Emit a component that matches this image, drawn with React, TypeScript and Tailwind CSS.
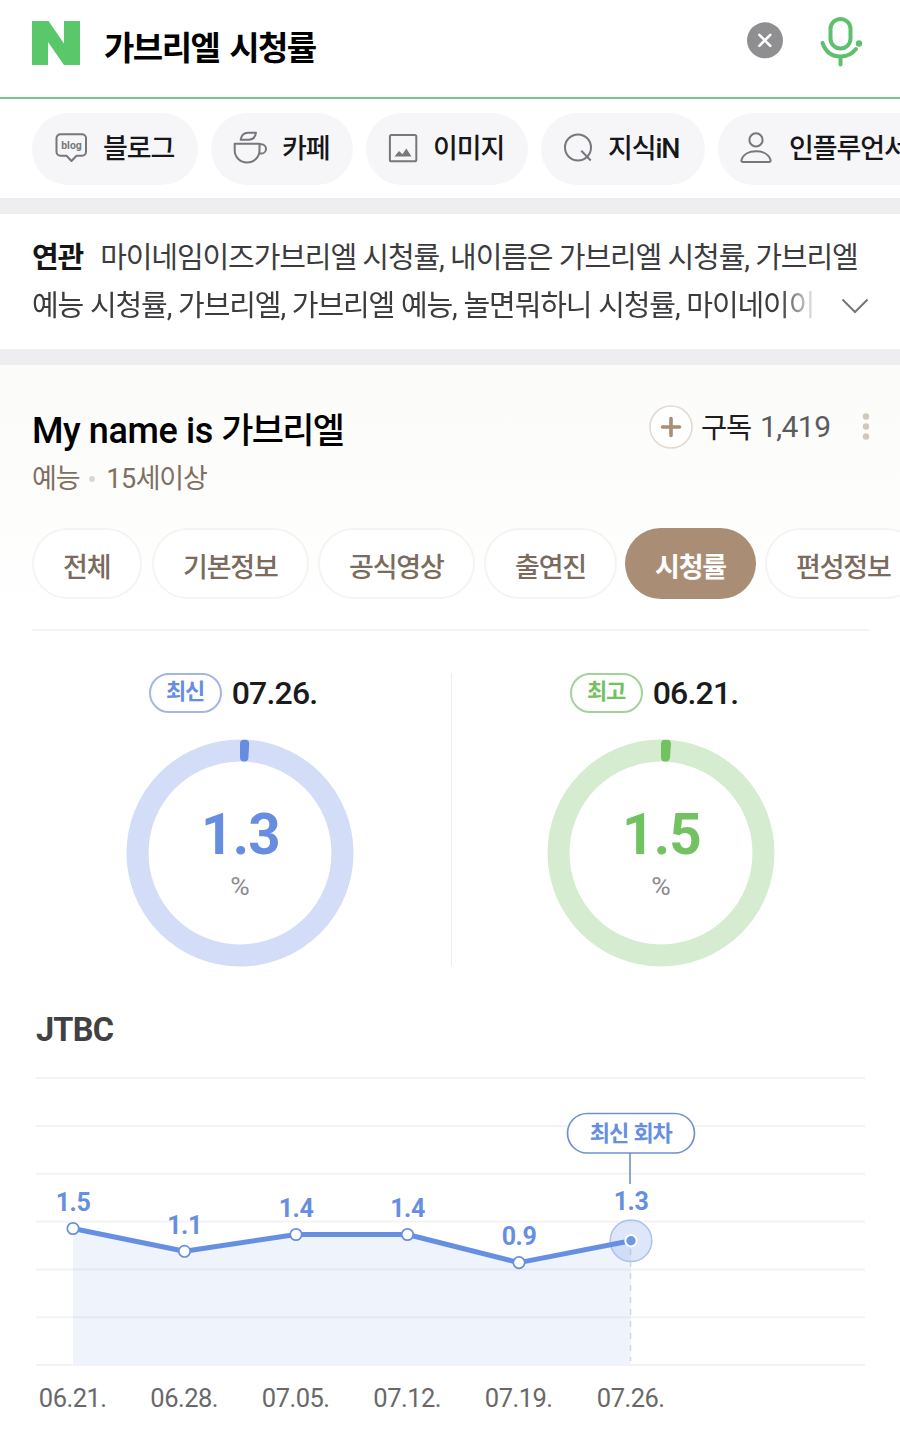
import type { ReactNode } from "react"

interface DonutProps {
    label: string;
    date: string;
    value: string;
    color: string;
    track: string;
    marker: string;
    badgeClass: string;
}

const BlogIcon = () => (
    <svg width="34" height="34" viewBox="0 0 34 34" fill="none" stroke="#77777b" strokeWidth="2">
        <path d="M6.500 3.200h21.500a4 4 0 0 1 4 4v13.600a4 4 0 0 1-4 4h-5.500L17.500 30l-5-5.200h-6a4 4 0 0 1-4-4V7.200a4 4 0 0 1 4-4z" strokeLinejoin="round" />
        <text x="17.500" y="18" textAnchor="middle" fontSize="11.500" fontWeight="700" fill="#77777b" stroke="none" textLength="20.500" lengthAdjust="spacingAndGlyphs">blog</text>
    </svg>
)

const CafeIcon = () => (
    <svg width="34" height="34" viewBox="0 0 34 34" fill="none" stroke="#77777b" strokeWidth="2" strokeLinejoin="round">
        <path d="M1.700 12.800h24.800v6.800a12.400 11.900 0 0 1-24.800 0z" />
        <path d="M26.500 13.300h1.900a4.600 4.600 0 0 1 0 9.200h-2.400" />
        <path d="M7.600 8.800C8.400 4 11 1.700 15 1.700h8C22.400 6.300 19.500 8.800 15.200 8.800z" />
    </svg>
)

const ImageIcon = () => (
    <svg width="34" height="34" viewBox="0 0 34 34" fill="none" stroke="#77777b" strokeWidth="2">
        <rect x="3.9" y="3.9" width="26.4" height="26.4" rx="1.6" />
        <path d="M8.500 25.500l4.500-5.500 3.500 3.200 3.800-5.700 5.200 8z" fill="#77777b" stroke="none" />
    </svg>
)

const KinIcon = () => (
    <svg width="34" height="34" viewBox="0 0 34 34" fill="none" stroke="#77777b" strokeWidth="2">
        <circle cx="17" cy="16.500" r="13" />
        <path d="M20.300 19.700l9.400 9.800" />
    </svg>
)

const PersonIcon = () => (
    <svg width="34" height="34" viewBox="0 0 34 34" fill="none" stroke="#77777b" strokeWidth="2">
        <circle cx="16" cy="8.900" r="6.600" />
        <path d="M3 31c-1.300 0-1.800-.8-1.500-1.900C3 23.300 9 20.300 16 20.300s13 3 14.500 8.800c.3 1.100-.2 1.900-1.500 1.900z" />
    </svg>
)

const Chip = ({ icon, text, className }: { icon: ReactNode; text: string; className: string }) => (
    <div className={`flex h-[72px] shrink-0 items-center rounded-full bg-[#f6f6f9] pb-[2px] ${className}`}>
        {icon}
        <span className="mt-[3px] text-[27px] font-medium tracking-[-1.1px] whitespace-nowrap text-[#17171a]">{text}</span>
    </div>
)

const Tab = ({ text, active, className }: { text: string; active?: boolean; className: string }) => (
    <div
        className={`flex h-[71px] shrink-0 items-center rounded-full pt-[9px] text-[27px] tracking-[-1.2px] whitespace-nowrap ${active ? "bg-[#a98d74] pl-[30px] font-bold text-white" : "border-2 border-[#f5f4f2] bg-white pl-[29px] font-medium text-[#7b6b5d]"} ${className}`}
    >
        {text}
    </div>
)

const Donut = ({ label, date, value, color, track, marker, badgeClass }: DonutProps) => (
    <div className="flex w-[228px] flex-col items-center">
        <div className="flex h-[40px] items-center pr-[14px]">
            <span className={`flex h-[40px] w-[73px] items-center justify-center rounded-full border-2 pb-[3px] text-[22px] font-bold tracking-[-1px] ${badgeClass}`}>{label}</span>
            <span className="ml-[10px] text-[32px] font-medium tracking-[-0.800px] text-[#1b1b1d]">{date}</span>
        </div>
        <svg className="mt-[26px]" width="228" height="228" viewBox="0 0 228 228">
            <circle cx="114" cy="114" r="102.500" fill="none" stroke={track} strokeWidth="22" />
            <path d={marker} fill={color} stroke={color} strokeWidth="8" strokeLinejoin="round" strokeLinecap="round" />
            <text x="114.500" y="114.500" textAnchor="middle" fontSize="56.500" fontWeight="700" letterSpacing="-0.8" fill={color}>{value}</text>
            <text x="114" y="156" textAnchor="middle" fontSize="26.500" fontWeight="400" fill="#8b8b8e">%</text>
        </svg>
    </div>
)

const points = [
    { date: "06.21.", value: "1.5", x: 37, y: 151.5, labelY: 134 },
    { date: "06.28.", value: "1.1", x: 148.5, y: 174.3, labelY: 157 },
    { date: "07.05.", value: "1.4", x: 260, y: 157.5, labelY: 140 },
    { date: "07.12.", value: "1.4", x: 371.5, y: 157.5, labelY: 140 },
    { date: "07.19.", value: "0.9", x: 483, y: 185.6, labelY: 168 },
    { date: "07.26.", value: "1.3", x: 595, y: 163.8, labelY: 133.4 },
]

const gridLines = [1, 49, 96.7, 144.6, 192.5, 240.3, 288]

const RatingChart = () => {
    const line = points.map((p) => `${p.x},${p.y}`).join(" ")

    return (
        <svg width="830" height="350" viewBox="0 0 830 350">
            {gridLines.map((y) => (
                <line key={y} x1="0" x2="829" y1={y} y2={y} stroke="#f3f3f5" strokeWidth="2" />
            ))}
            <polygon points={`37,287 ${line} 594.5,287`} fill="#5a87e6" fillOpacity="0.1" />
            <line x1="594.500" x2="594.500" y1="172" y2="284" stroke="#cdd6eb" strokeWidth="1.500" strokeDasharray="6 6" />
            <circle cx="595" cy="163.800" r="20.800" fill="#6b93e4" fillOpacity="0.22" stroke="#adc1ea" strokeWidth="1.500" />
            <polyline points={line} fill="none" stroke="#668fe2" strokeWidth="5" strokeLinejoin="round" />
            {points.map((p, i) => (
                <g key={p.date}>
                    {i < 5 ? (
                        <circle cx={p.x} cy={p.y} r="5.700" fill="#fff" stroke="#668fe2" strokeWidth="1.700" />
                    ) : (
                        <circle cx={p.x} cy={p.y} r="5.700" fill="#7098e4" stroke="#fff" strokeWidth="2" />
                    )}
                    <text x={p.x} y={p.labelY} textAnchor="middle" fontSize="25" fontWeight="700" letterSpacing="-0.4" fill="#668fe2">{p.value}</text>
                    <text x={p.x - 0.3} y="329.500" textAnchor="middle" fontSize="25.500" letterSpacing="-0.5" fill="#68686b">{p.date}</text>
                </g>
            ))}
            <line x1="594" x2="594" y1="76" y2="107" stroke="#8096bb" strokeWidth="1.700" />
            <rect x="531.500" y="36.500" width="127" height="39.500" rx="19.700" fill="#fff" stroke="#728fd2" strokeWidth="1.700" />
            <text x="594.800" y="63.500" textAnchor="middle" fontSize="22" fontWeight="700" letterSpacing="-1.1" wordSpacing="1" fill="#668fe2">최신 회차</text>
        </svg>
    )
}

const App = () => {
    return (
        <div className="h-[1454px] w-[900px] overflow-hidden bg-white font-['Roboto','Noto_Sans_CJK_KR',sans-serif]">
            <header className="flex h-[99px] items-center border-b-2 border-[#7cc68a] pb-[10px] pl-[32px]">
                <svg className="-mt-[1px]" width="48" height="44" viewBox="0 0 48 44" fill="#5bc76b">
                    <path d="M0 0h16.500L32 22.500V0h16v44H32L16 21v23H0z" />
                </svg>
                <h1 className="mt-[11px] ml-[24px] w-[643px] text-[33px] font-bold tracking-[-1.500px] text-black [word-spacing:3px]">가브리엘 시청률</h1>
                <svg className="-mt-[7px]" width="36" height="37" viewBox="0 0 36 37">
                    <circle cx="18" cy="18.300" r="18" fill="#8f8f91" />
                    <path d="M12.300 12.800l11 11M23.300 12.800l-11 11" stroke="#fff" strokeWidth="2.600" strokeLinecap="round" />
                </svg>
                <svg className="-mt-[4px] ml-[35px]" width="46" height="52" viewBox="0 0 46 52" fill="none" stroke="#5ec06c" strokeWidth="4" strokeLinecap="round">
                    <rect x="12.500" y="3" width="20" height="29.500" rx="10" />
                    <path d="M4.500 27C7.500 35.500 14 40.500 22.500 40.500c6.500 0 12-3 15.500-7.500M22.500 41v7.500" />
                    <circle cx="41" cy="27.500" r="3.200" fill="#5ec06c" stroke="none" />
                </svg>
            </header>

            <nav className="flex h-[99px] gap-x-[13px] overflow-hidden pt-[14px] pl-[32px]">
                <Chip icon={<BlogIcon />} text="블로그" className="w-[166px] gap-x-[15px] pl-[22px]" />
                <Chip icon={<CafeIcon />} text="카페" className="w-[142px] gap-x-[15px] pl-[22px]" />
                <Chip icon={<ImageIcon />} text="이미지" className="w-[162px] gap-x-[13px] pl-[20px]" />
                <Chip icon={<KinIcon />} text="지식iN" className="w-[164px] gap-x-[13px] pl-[20px]" />
                <Chip icon={<PersonIcon />} text="인플루언서" className="w-[230px] gap-x-[15px] pl-[22px]" />
            </nav>

            <section className="flex h-[167px] border-y-[16px] border-[#eeeef0] pt-[21px] pl-[32px]">
                <div className="w-[836px] text-[29px] leading-[47.500px] tracking-[-1.100px] whitespace-nowrap text-[#3c3c3f]">
                    <p className="[word-spacing:0.300px]">
                        <strong className="mr-[17px] font-bold text-[#151517]">연관</strong>
                        마이네임이즈가브리엘 시청률, 내이름은 가브리엘 시청률, 가브리엘
                    </p>
                    <div className="flex items-center justify-between">
                        <p className="w-[786px] overflow-hidden [mask-image:linear-gradient(to_right,black_748px,transparent_786px)] [word-spacing:0.700px]">
                            예능 시청률, 가브리엘, 가브리엘 예능, 놀면뭐하니 시청률, 마이네이이
                        </p>
                        <svg className="-mt-[1px]" width="28" height="16" viewBox="0 0 28 16" fill="none" stroke="#77777a" strokeWidth="2">
                            <path d="M2.500 1.500L15 14 27.500 1.500" />
                        </svg>
                    </div>
                </div>
            </section>

            <section className="h-[265px] bg-linear-to-b from-[#fbfbf9] to-white pt-[37px] pl-[32px]">
                <div className="flex h-[50px] items-center">
                    <h2 className="mt-[9px] w-[617px] text-[36px] font-medium tracking-[-0.400px] text-black">
                        My name is <span className="text-[35px] tracking-[-1.700px]">가브리엘</span>
                    </h2>
                    <svg width="44" height="44" viewBox="0 0 44 44" fill="none">
                        <circle cx="22" cy="22" r="21" fill="#fff" stroke="#e3dad1" strokeWidth="1.600" />
                        <path d="M22 13.500v17M13.500 22h17" stroke="#a98d74" strokeWidth="3.600" strokeLinecap="round" />
                    </svg>
                    <span className="mt-[4px] ml-[8px] text-[28.500px] tracking-[-1.200px] text-[#1e1e20]">구독</span>
                    <span className="-mt-[1px] ml-[9px] w-[102px] text-[30px] tracking-[-0.600px] text-[#5b5b5e]">1,419</span>
                    <svg width="8" height="30" viewBox="0 0 8 30" fill="#d3c7ba">
                        <circle cx="4" cy="4.500" r="3.200" />
                        <circle cx="4" cy="14.500" r="3.200" />
                        <circle cx="4" cy="24.500" r="3.200" />
                    </svg>
                </div>
                <div className="flex h-[52px] items-center pt-[3px] text-[27px] tracking-[-1.200px] text-[#7f6f61]">
                    <span>예능</span>
                    <span className="-mt-[2px] mr-[11px] ml-[10px] size-[6px] rounded-full bg-[#ddd7d0]" />
                    <span><span className="tracking-[-0.500px]">15</span>세이상</span>
                </div>
                <div className="mt-[24px] flex overflow-hidden">
                    <Tab text="전체" className="mr-[10px] w-[110px]" />
                    <Tab text="기본정보" className="mr-[9px] w-[157px]" />
                    <Tab text="공식영상" className="mr-[9px] w-[157px]" />
                    <Tab text="출연진" className="mr-[8px] w-[133px]" />
                    <Tab text="시청률" active className="mr-[9px] w-[131px]" />
                    <Tab text="편성정보" className="w-[157px]" />
                </div>
                <hr className="mt-[30px] w-[837px] border-t-2 border-[#f3f3f2]" />
            </section>

            <section className="flex pt-[43px] pl-[126px]">
                <Donut
                    label="최신"
                    date="07.26."
                    value="1.3"
                    color="#668de0"
                    track="#d3ddf7"
                    marker="M118 4.700L119.200 4.700 118.400 18.500 118 18.500z"
                    badgeClass="border-[#a3b7e6] text-[#668de0]"
                />
                <div className="mr-[95px] ml-[97px] h-[293px] w-[1px] bg-[#ebeef0]" />
                <Donut
                    label="최고"
                    date="06.21."
                    value="1.5"
                    color="#73c262"
                    track="#d5ecd0"
                    marker="M118 4.700L120 4.700 119 18.500 118 18.500z"
                    badgeClass="border-[#a2d499] text-[#73c262]"
                />
            </section>

            <section className="pt-[43px] pl-[36px]">
                <h3 className="h-[67px] text-[32.500px] leading-[41px] font-bold tracking-[-0.800px] text-[#414143]">JTBC</h3>
                <RatingChart />
            </section>
        </div>
    )
}

export default App
